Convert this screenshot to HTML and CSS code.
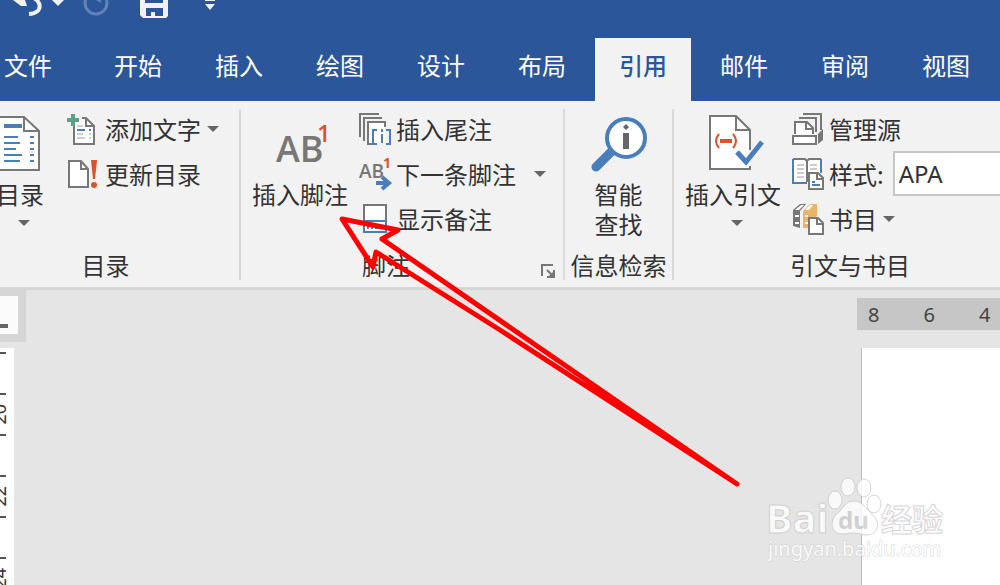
FILE: index.html
```html
<!DOCTYPE html>
<html lang="zh-CN">
<head>
<title>引用</title>
<meta charset="utf-8">
<meta name="viewport" content="width=device-width, initial-scale=1">
<link rel="stylesheet" href="styles.css">
</head>
<body>

<header>
  <div class="quickbar">
    <button class="quick undo" aria-label="撤消">
      <svg width="66" height="18" viewBox="0 0 66 18">
        <path d="M13 0h12l2 6h-6z" fill="#f2f2f2"/>
        <path d="M30 -3C42 -1 44 13 29 14" fill="none" stroke="#f2f2f2" stroke-width="4"/>
        <path d="M52 0h12l-6 6z" fill="#f2f2f2"/>
      </svg>
    </button>
    <button class="quick redo" aria-label="重复">
      <svg width="28" height="18" viewBox="0 0 28 18">
        <circle cx="14" cy="3" r="11" fill="none" stroke="#6283b8" stroke-width="3"/>
        <path d="M14 0h5v3z" fill="#6283b8"/>
      </svg>
    </button>
    <button class="quick save" aria-label="保存">
      <svg width="28" height="18" viewBox="0 0 28 18">
        <path d="M0 0h28v16l-2 2H3l-3-3z" fill="#f2f2f2"/>
        <path d="M5 0h18v3H5zM6 8h17v8h-8v-4h-4v4H6z" fill="#2b579a"/>
      </svg>
    </button>
    <button class="quick more" aria-label="自定义快速访问工具栏">
      <svg width="12" height="18" viewBox="0 0 12 18">
        <path d="M1 0h10v1H1zM1 4h10l-5 6z" fill="#f2f2f2"/>
      </svg>
    </button>
  </div>

  <nav>
    <a href="#" class="file">文件</a>
    <a href="#">开始</a>
    <a href="#">插入</a>
    <a href="#">绘图</a>
    <a href="#">设计</a>
    <a href="#">布局</a>
    <a href="#" class="active">引用</a>
    <a href="#">邮件</a>
    <a href="#">审阅</a>
    <a href="#">视图</a>
  </nav>
</header>

<section class="ribbon">

  <div class="group toc">
    <div class="tools">
      <button class="big">
        <svg width="56" height="60" viewBox="8 0 56 60">
          <path d="M8 5h32l15 14v39H8z" fill="#fff" stroke="#777" stroke-width="2"/>
          <path d="M40 5v14h15" fill="none" stroke="#777" stroke-width="2"/>
          <path d="M20 14h18" stroke="#4a7ebb" stroke-width="4"/>
          <path d="M20 25h14M20 31h16M20 37h12M20 43h18M20 49h16M46 25h4M46 31h4M46 37h4M46 43h4M46 49h4" stroke="#4a7ebb" stroke-width="2"/>
        </svg>
        <span>目录</span>
        <i class="caret"></i>
      </button>
      <div class="rows">
        <button class="small">
          <svg width="32" height="34" viewBox="0 0 32 34">
            <path d="M7 8h13l7 8v17H7z" fill="#fff"/>
            <path d="M6 14v18h20V14l-8-8h-4M18 6v8h8" fill="none" stroke="#777" stroke-width="2"/>
            <path d="M5 2v12M-1 8h12" stroke="#5da08a" stroke-width="4"/>
            <path d="M9 18h8M21 18h2" stroke="#4a7ebb" stroke-width="2"/>
            <path d="M9 14h6M9 22h6M9 26h8M21 22h2M21 26h2" stroke="#999" stroke-width="1"/>
          </svg>
          <span>添加文字</span>
          <i class="caret"></i>
        </button>
        <button class="small">
          <svg width="32" height="34" viewBox="0 0 32 34">
            <path d="M1 4h12l7 8v18H1z" fill="#fff" stroke="#777" stroke-width="2"/>
            <path d="M13 4v8h7" fill="none" stroke="#777" stroke-width="2"/>
            <path d="M23 3h6l-2 19h-2z" fill="#d9532c"/>
            <circle cx="26" cy="28" r="3" fill="#d9532c"/>
          </svg>
          <span>更新目录</span>
        </button>
      </div>
    </div>
    <div class="title"><span>目录</span></div>
  </div>

  <div class="group notes">
    <div class="tools">
      <button class="big">
        <svg width="56" height="60" viewBox="0 0 56 60">
          <text class="ab" x="4" y="50">AB</text>
          <text class="one" x="45" y="30">1</text>
        </svg>
        <span>插入脚注</span>
      </button>
      <div class="rows">
        <button class="small">
          <svg width="32" height="34" viewBox="0 0 32 34">
            <path d="M9 9h17v22H9z" fill="#fff"/>
            <path d="M1 25V2h19M5 29V6h18M13 32H9V10h17v5" fill="none" stroke="#777" stroke-width="2"/>
            <path d="M18 18h-4v14h4M27 18h4v14h-4M23 17v3M23 22v9" fill="none" stroke="#4a7ebb" stroke-width="2"/>
          </svg>
          <span>插入尾注</span>
        </button>
        <button class="small">
          <svg width="32" height="34" viewBox="0 0 32 34">
            <text class="ab-small" x="0" y="21">AB</text>
            <text class="one-small" x="24" y="11">1</text>
            <path d="M17 26h12M23 20l7 6l-7 6" fill="none" stroke="#4a7ebb" stroke-width="4"/>
          </svg>
          <span>下一条脚注</span>
          <i class="caret far"></i>
        </button>
        <button class="small">
          <svg width="32" height="34" viewBox="0 0 32 34">
            <path d="M5 18V3h22v15" fill="#fff" stroke="#777" stroke-width="2"/>
            <path d="M5 19h22v11H5z" fill="#fff" stroke="#4a7ebb" stroke-width="2"/>
            <path d="M9 23v4M12 26h2M16 26h7" stroke="#4a7ebb" stroke-width="2"/>
          </svg>
          <span>显示备注</span>
        </button>
      </div>
    </div>
    <div class="title">
      <span>脚注</span>
      <button class="launcher" aria-label="脚注和尾注">
        <svg width="14" height="14" viewBox="0 0 14 14">
          <path d="M1 12V1h11" fill="none" stroke="#777" stroke-width="2"/>
          <path d="M6 6l6 6M13 6v7H6" fill="none" stroke="#777" stroke-width="2"/>
          <path d="M13 7v6H7z" fill="#777"/>
        </svg>
      </button>
    </div>
  </div>

  <div class="group lookup">
    <div class="tools">
      <button class="big">
        <svg width="56" height="60" viewBox="0 0 56 60">
          <path d="M22 38L5 55" stroke="#4a7ebb" stroke-width="9" stroke-linecap="round"/>
          <circle cx="35" cy="26" r="19" fill="#fff" stroke="#4a7ebb" stroke-width="4"/>
          <path d="M35 12l3 3l-3 3l-3-3zM32 21h6v16h-6z" fill="#666"/>
        </svg>
        <span>智能<br>查找</span>
      </button>
    </div>
    <div class="title"><span>信息检索</span></div>
  </div>

  <div class="group cite">
    <div class="tools">
      <button class="big">
        <svg width="56" height="60" viewBox="0 0 56 60">
          <path d="M5 4h26l14 14v39H5z" fill="#fff"/>
          <path d="M45 38V18L31 4H5v53h40v-3M31 4v14h14" fill="none" stroke="#777" stroke-width="2"/>
          <path d="M14 22q-6 7 0 14M28 22q6 7 0 14" fill="none" stroke="#d9532c" stroke-width="2"/>
          <path d="M15 29h12" stroke="#d9532c" stroke-width="4"/>
          <path d="M32 40l9 10l16-20" fill="none" stroke="#4a7ebb" stroke-width="5"/>
        </svg>
        <span>插入引文</span>
        <i class="caret"></i>
      </button>
      <div class="rows">
        <button class="small">
          <svg width="32" height="34" viewBox="0 0 32 34">
            <path d="M3 10h12l6 6v8H3z" fill="#fff"/>
            <path d="M3 22V10h12l6 6v6M14 10v7h7M7 6h17v14M11 2h18v16" fill="none" stroke="#777" stroke-width="2"/>
            <path d="M1 24h23v8H1z" fill="#fff" stroke="#777" stroke-width="2"/>
            <path d="M26 22l5-5v11l-5 4z" fill="#777"/>
          </svg>
          <span>管理源</span>
        </button>
        <div class="small">
          <svg width="32" height="34" viewBox="0 0 32 34">
            <path d="M1 2h14v24H1zM15 2h14v24H15z" fill="#fff"/>
            <path d="M1 2v24h14M29 2v14" fill="none" stroke="#4a7ebb" stroke-width="2"/>
            <path d="M1 2h12l2 2l2-2h12M15 3v22" fill="none" stroke="#777" stroke-width="2"/>
            <path d="M5 8h7M5 12h7M5 16h7M5 20h7M18 8h7M18 12h7" stroke="#999" stroke-width="1"/>
            <path d="M17 16h9l5 5v11H17z" fill="#fff" stroke="#777" stroke-width="2"/>
            <path d="M25 16v6h6" fill="none" stroke="#777" stroke-width="2"/>
            <path d="M20 25h3M20 28h8" stroke="#4a7ebb" stroke-width="2"/>
          </svg>
          <label for="style">样式:</label>
          <input id="style" type="text" value="APA">
        </div>
        <button class="small">
          <svg width="32" height="34" viewBox="0 0 32 34">
            <path d="M1 8l7-6h6l-6 7v17l-7-2z" fill="#777"/>
            <path d="M3 8l6-5h3l-5 5zM3 13h4v2H3zM3 20h4v2H3z" fill="#fff"/>
            <path d="M11 9l7-7h7v12l-7 4v8h-7z" fill="#eab566"/>
            <path d="M13 8l5-5h3l-4 5zM13 13h3v2h-3zM13 20h3v2h-3z" fill="#fff"/>
            <path d="M17 16h9l5 5v11H17z" fill="#fff" stroke="#777" stroke-width="2"/>
            <path d="M25 16v6h6" fill="none" stroke="#777" stroke-width="2"/>
          </svg>
          <span>书目</span>
          <i class="caret"></i>
        </button>
      </div>
    </div>
    <div class="title"><span>引文与书目</span></div>
  </div>

</section>

<main>
  <div class="side">
    <div class="tabstop"><i></i></div>
    <ol class="vruler">
      <li></li>
      <li><span>20</span></li>
      <li></li>
      <li><span>22</span></li>
      <li></li>
      <li><span>24</span></li>
    </ol>
  </div>
  <article>
    <div class="hruler"><span>8</span><span>6</span><span>4</span></div>
    <div class="paper"></div>
  </article>
</main>

<!-- arrow pointing at the footnote button -->
<svg class="arrow" width="410" height="280" viewBox="335 212 410 280">
  <path d="M737 484L382 239L398 230L342 219L373 267L376 252L500 330Z" fill="none" stroke="#f00" stroke-width="5" stroke-linejoin="round"/>
</svg>

<svg class="watermark" width="190" height="90" viewBox="762 475 190 90">
  <g fill="#fff" stroke="#ccc" stroke-width="1">
    <text class="logo" x="766" y="533">Bai</text>
    <ellipse cx="835" cy="500" rx="7" ry="9"/>
    <ellipse cx="848" cy="487" rx="7" ry="9"/>
    <ellipse cx="864" cy="488" rx="7" ry="9"/>
    <ellipse cx="874" cy="504" rx="7" ry="9"/>
    <path d="M854 501c-9 0-11 8-17 13c-8 7-6 20 5 20c5 0 7-1 12-1s8 2 13 2c11 0 14-13 6-20c-7-6-10-14-19-14z"/>
    <text class="jingyan" x="881" y="531">经验</text>
  </g>
  <text class="du" x="838" y="529">du</text>
  <text class="url" x="768" y="556">jingyan.baidu.com</text>
</svg>

</body>
</html>
```
FILE: styles.css
```css
* {
  box-sizing: border-box;
}

body {
  margin: 0;
  height: 100vh;
  display: flex;
  flex-direction: column;
  overflow: hidden;
  position: relative;
  font-family: "Noto Sans CJK SC", sans-serif;
  font-size: 24px;
  line-height: 30px;
  color: #333;
  background: #e5e5e5;
}

button {
  border: 0;
  padding: 0;
  background: none;
  font: inherit;
  color: inherit;
}

svg {
  display: block;
  flex: none;
  overflow: visible;
}

/* Blue title area */
header {
  flex: none;
  background: #2b579a;
  overflow: hidden;
}

.quickbar {
  display: flex;
  height: 38px;
  align-items: flex-start;
}

.redo {
  margin-left: 16px;
}

.save {
  margin-left: 30px;
}

.more {
  margin-left: 36px;
}

nav {
  display: flex;
  gap: 5px;
}

nav a {
  flex: none;
  width: 96px;
  height: 63px;
  padding-top: 12px;
  text-align: center;
  color: #fff;
  text-decoration: none;
  white-space: nowrap;
}

nav a.file {
  padding-left: 4px;
  width: 85px;
  text-align: left;
}

nav a.active {
  background: #f2f2f2;
  color: #2b579a;
  font-weight: 500;
}

/* Ribbon */
.ribbon {
  flex: none;
  display: flex;
  background: #f2f2f2;
  border-bottom: 3px solid #d6d6d6;
  padding: 8px 0 7px;
  overflow: hidden;
}

.group {
  flex: none;
  display: flex;
  flex-direction: column;
  border-right: 2px solid #d9d9d9;
}

.toc {
  margin-left: -28px;
  width: 269px;
}

.notes {
  width: 324px;
  padding-left: 11px;
}

.lookup {
  width: 109px;
}

.cite {
  width: 354px;
  padding-left: 11px;
}

.tools {
  display: flex;
  height: 141px;
}

.big {
  width: 96px;
  padding-top: 3px;
  display: flex;
  flex-direction: column;
  align-items: center;
  white-space: nowrap;
}

.lookup .big {
  width: 107px;
}

.big span {
  margin-top: 7px;
}

.rows {
  margin: -3px 0 0 11px;
  flex: 1;
}

.toc .rows {
  margin-left: 0;
}

.small {
  display: flex;
  align-items: center;
  height: 45px;
  width: 100%;
  white-space: nowrap;
}

.small span,
.small label {
  margin-left: 5px;
}

.caret {
  border: 6px solid transparent;
  border-top-color: #666;
  border-bottom: 0;
}

.small .caret {
  margin-left: 6px;
}

.small .caret.far {
  margin-left: 18px;
}

.big .caret {
  margin: 11px 0 0 8px;
}

.small input {
  flex: 1;
  min-width: 0;
  height: 45px;
  margin-left: 9px;
  padding: 0 4px;
  border: 2px solid #c6c6c6;
  background: #fff;
  color: #333;
  font: 24px "Noto Sans", sans-serif;
}

.title {
  display: flex;
  align-items: center;
  text-align: center;
}

.title span {
  flex: 1;
}

.notes .title,
.cite .title {
  margin-left: -11px;
}

.launcher {
  width: 32px;
  padding: 12px 0 0 10px;
}

.ab {
  font: 600 36px "Open Sans", sans-serif;
  fill: #777;
}

.one {
  font: 600 24px "Open Sans", sans-serif;
  fill: #d9532c;
}

.ab-small {
  font: 600 19px "Open Sans", sans-serif;
  fill: #777;
}

.one-small {
  font: bold 14px "Open Sans", sans-serif;
  fill: #d9532c;
}

/* Document area */
main {
  flex: 1;
  min-height: 0;
  display: grid;
  grid-template-columns: 26px 831fr 143fr;
  grid-template-rows: 100%;
}

.side {
  display: flex;
  flex-direction: column;
}

.tabstop {
  flex: none;
  height: 52px;
  background: #fbfbfb;
  border: solid #d6d6d6;
  border-width: 6px 8px 8px 0;
  padding-top: 28px;
}

.tabstop i {
  display: block;
  width: 8px;
  height: 4px;
  background: #666;
}

.vruler {
  flex: 1;
  min-height: 0;
  width: 14px;
  margin: 6px 0 0;
  padding: 4px 0 0;
  list-style: none;
  background: #fff;
}

.vruler li {
  width: 6px;
  height: 41px;
  border-top: 2px solid #555;
  display: flex;
  align-items: center;
  justify-content: flex-end;
}

.vruler span {
  flex: none;
  margin-right: -3px;
  writing-mode: vertical-rl;
  transform: rotate(180deg);
  font: 18px/20px "Noto Sans", sans-serif;
}

article {
  grid-column: 3;
  display: flex;
  flex-direction: column;
}

.hruler {
  height: 32px;
  margin-top: 8px;
  padding-left: 11px;
  display: flex;
  gap: 44px;
  overflow: hidden;
  background: #c6c6c6;
  color: #444;
  font: 20px/34px "Noto Sans", sans-serif;
}

.paper {
  flex: 1;
  margin: 18px 0 0 4px;
  background: #fff;
  border-left: 1px solid #bbb;
}

.arrow {
  position: absolute;
  left: 335px;
  top: 212px;
}

.watermark {
  position: absolute;
  right: 48px;
  bottom: 20px;
  opacity: 0.8;
}

.logo {
  font: bold 40px "Noto Sans", sans-serif;
}

.du {
  font: bold 24px "Noto Sans", sans-serif;
  fill: #ccc;
}

.jingyan {
  font: bold 31px "Noto Sans CJK SC", sans-serif;
}

.url {
  font: 20px "Noto Sans", sans-serif;
  fill: #fff;
  stroke: #ccc;
  stroke-width: 1px;
  paint-order: stroke;
}
```
